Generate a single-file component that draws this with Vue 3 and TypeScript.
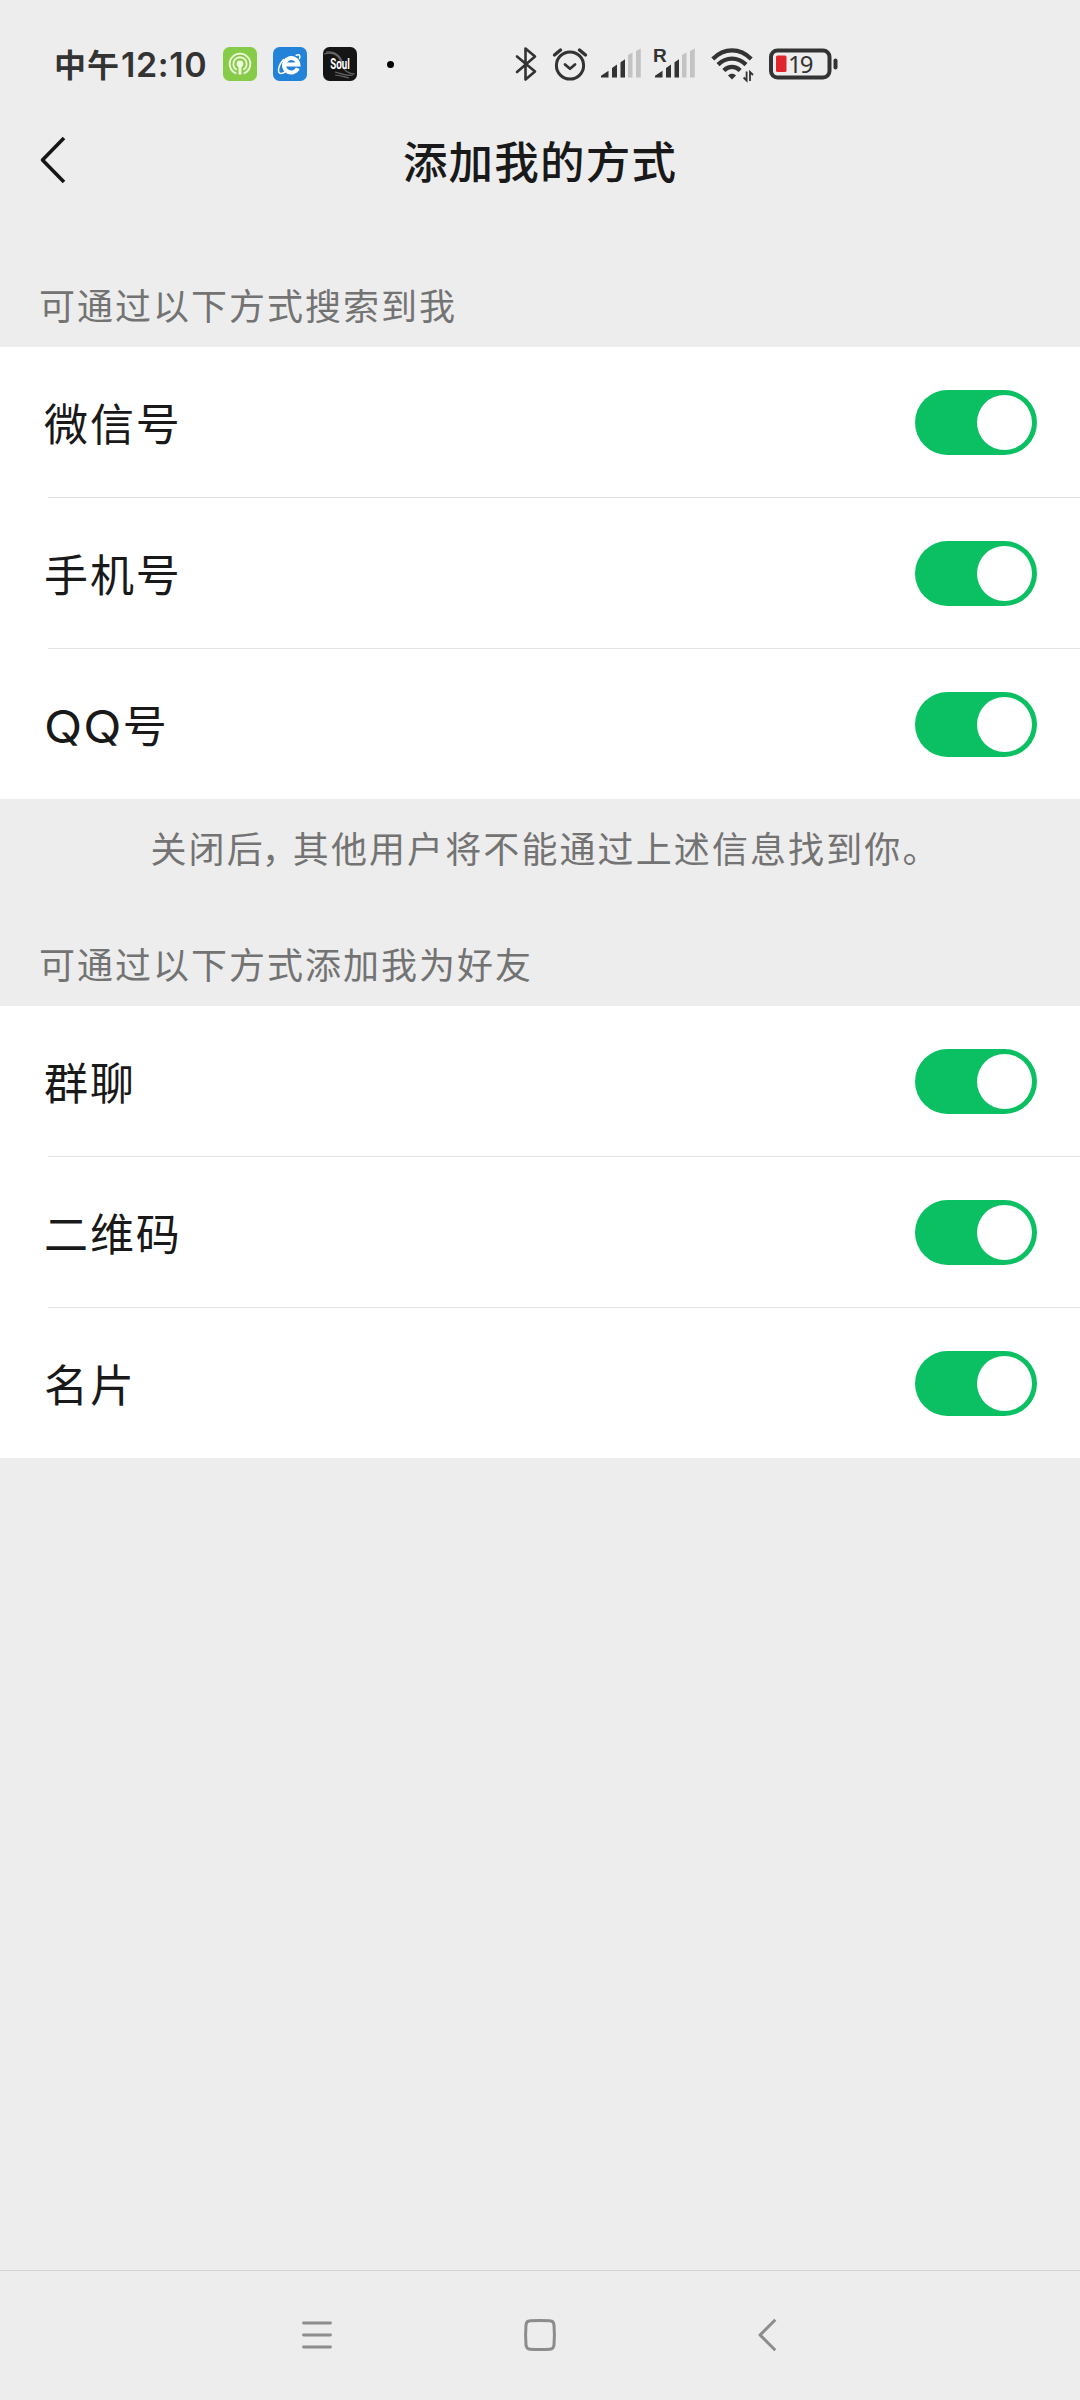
<script setup lang="ts">
import { reactive } from 'vue'

interface Item {
  latin?: string
  label: string
  on: boolean
}

const searchItems = reactive<Item[]>([
  { label: '微信号', on: true },
  { label: '手机号', on: true },
  { latin: 'QQ', label: '号', on: true },
])

const addItems = reactive<Item[]>([
  { label: '群聊', on: true },
  { label: '二维码', on: true },
  { label: '名片', on: true },
])

const groups = [
  { title: '可通过以下方式搜索到我', items: searchItems, hint: true },
  { title: '可通过以下方式添加我为好友', items: addItems, hint: false },
]
</script>

<template>
  <div class="screen">
    <div class="status">
      <div class="clock"><span class="noon">中午</span><span class="time">12:10</span></div>
      <div class="apps">
        <svg width="34" height="34" viewBox="0 0 34 34">
          <rect width="34" height="34" rx="6.5" fill="#86cc48" />
          <g fill="none" stroke="#effbdc" stroke-width="1.9" stroke-linecap="round">
            <path d="M12.6 26.2a10.3 10.3 0 1 1 8.800 0" />
            <path d="M13 22.3a6.7 6.7 0 1 1 8 0" />
          </g>
          <circle cx="17" cy="16.8" r="3.4" fill="#effbdc" />
          <path d="M17 18v9.500" stroke="#effbdc" stroke-width="3" />
        </svg>
        <svg width="34" height="34" viewBox="0 0 34 34">
          <rect width="34" height="34" rx="6.500" fill="#2383d8" />
          <path d="M24.800 21.300A7.200 7.200 0 1 1 25.400 17.600H12" fill="none" stroke="#fff" stroke-width="4" />
          <path d="M26.500 11.500c1.200-3.300-.4-4.500-3.300-3.300M10.500 12.500C6.500 17 4.600 22.500 5.900 25.300c.8 1.700 3.600 1.300 6.100-.3" fill="none" stroke="#fff" stroke-width="1.500" stroke-linecap="round" />
        </svg>
        <svg width="34" height="34" viewBox="0 0 34 34">
          <rect width="34" height="34" rx="6.500" fill="#151515" />
          <path d="M1 7c10-3 16 2 18 11 2 6 6 9 13 9M3 5c10-1 15 4 17 13M12 25c5 1 12 5 18 3M12 28c5 0 9 2 14 3" fill="none" stroke="#666" stroke-width="1.200" />
          <text x="17" y="21.500" class="soul" text-anchor="middle" textLength="19.500" lengthAdjust="spacingAndGlyphs">Soul</text>
        </svg>
        <i class="dot"></i>
      </div>
      <div class="system">
        <svg class="bt" width="22" height="36" viewBox="0 0 22 36" fill="none" stroke="#333" stroke-width="2.600" stroke-linejoin="round" stroke-linecap="round">
          <path d="M2 10.500 20 25.500 10.500 33.500V2.500l9.500 8L2 26" />
        </svg>
        <svg class="alarm" width="36" height="36" viewBox="0 0 36 36" fill="none" stroke="#333" stroke-linecap="round">
          <circle cx="18" cy="19.500" r="13.600" stroke-width="3" />
          <path d="m13 18.500 5 4.300 5-4.300" stroke-width="2.800" stroke-linejoin="round" />
          <path d="M2.500 9 8.500 4M33.500 9l-6-5" stroke-width="3.400" />
        </svg>
        <svg class="signal" width="42" height="36" viewBox="0 0 42 36">
          <path d="M1 31.500v-1.800l7.500-5v6.800zM12 31.500v-9.500l5-3.500v13zM20.500 31.500V16.200l4.500-3v18.300z" fill="#333" />
          <path d="M28 31.500V9l4.500-2.500v25zM36 31.500V5l4.800-2.500v29z" fill="#c3c3c3" />
        </svg>
        <svg class="signal second" width="42" height="36" viewBox="0 0 42 36">
          <path d="M1 31.500v-1.800l7.500-5v6.800zM12 31.500v-9.500l5-3.500v13zM20.500 31.500V16.200l4.500-3v18.300z" fill="#333" />
          <path d="M28 31.500V9l4.500-2.500v25zM36 31.500V5l4.800-2.500v29z" fill="#c3c3c3" />
          <text x="-1" y="16" class="roam">R</text>
        </svg>
        <svg class="wifi" width="43" height="36" viewBox="0 0 43 36" fill="none" stroke="#333" stroke-width="4.300">
          <path d="M1.800 13C13 1.500 29 1.500 40.200 13M7 18.600c8.300-8 19.700-8 28 0M12.800 24.500c5-4.700 11.400-4.700 16.400 0" />
          <path d="M21 33.500l-4-4c2-2.300 6-2.300 8 0z" fill="#333" stroke="none" />
          <path d="M35.600 25.500v9l-3-3M39 35v-9l3 3" stroke-width="1.800" />
        </svg>
        <svg class="battery" width="70" height="36" viewBox="0 0 70 36">
          <rect x="2" y="4.500" width="58.500" height="27" rx="6.500" fill="none" stroke="#333" stroke-width="4" />
          <rect x="7" y="9.500" width="10.500" height="16.500" rx="1.500" fill="#e0262c" />
          <text x="19" y="27" class="percent">19</text>
          <rect x="64.500" y="12.500" width="4" height="11" rx="2" fill="#333" />
        </svg>
      </div>
    </div>

    <header class="bar">
      <svg class="back" width="28" height="50" viewBox="0 0 28 50" fill="none" stroke="#161616" stroke-width="3.600" stroke-linejoin="round">
        <path d="M26 3 4.500 25 26 47" />
      </svg>
      <h1>添加我的方式</h1>
    </header>

    <section v-for="(group, i) in groups" :key="group.title" :class="['section', i ? 'later' : 'first']">
      <h2>{{ group.title }}</h2>
      <ul>
        <li v-for="item in group.items" :key="item.label">
          <span class="label"><span v-if="item.latin" class="latin">{{ item.latin }}</span>{{ item.label }}</span>
          <button type="button" role="switch" :aria-checked="item.on" :class="['switch', { on: item.on }]" @click="item.on = !item.on">
            <i></i>
          </button>
        </li>
      </ul>
      <p v-if="group.hint">关闭后<span class="comma">，</span>其他用户将不能通过上述信息找到你。</p>
    </section>

    <nav>
      <svg width="36" height="36" viewBox="0 0 36 36" stroke="#8c8c8c" stroke-width="2.800" stroke-linecap="round">
        <path d="M4.500 6h27M4.500 18h27M4.500 30h27" />
      </svg>
      <svg width="36" height="36" viewBox="0 0 36 36" fill="none" stroke="#8c8c8c" stroke-width="3">
        <path d="M8 3.800Q18 3 28 3.800Q31.700 4 32 8Q32.800 18 32 28Q31.700 32 28 32.200Q18 33 8 32.200Q4.300 32 4 28Q3.200 18 4 8Q4.300 4 8 3.800Z" />
      </svg>
      <svg width="36" height="36" viewBox="0 0 36 36" fill="none" stroke="#8c8c8c" stroke-width="3" stroke-linejoin="round">
        <path d="M30.300 2.800 15 18l15.300 15.200" />
      </svg>
    </nav>
  </div>
</template>

<style>
body {
  background: #ededed;
}
</style>

<style scoped>
.screen {
  width: 1080px;
  height: 2400px;
  background: #ededed;
  color: #191919;
  font-family: "Noto Sans CJK SC", sans-serif;
  display: flex;
  flex-direction: column;
  overflow: hidden;
}
.status {
  height: 128px;
  flex: none;
  display: flex;
  align-items: center;
  padding-left: 54px;
  box-sizing: border-box;
}
.clock {
  width: 169px;
  margin-top: -3px;
  display: flex;
  align-items: baseline;
  color: #333;
  white-space: nowrap;
}
.noon {
  width: 67px;
  font-size: 32px;
  font-weight: 700;
  letter-spacing: 1px;
}
.time {
  font-family: Inter, sans-serif;
  font-size: 34px;
  font-weight: 600;
  letter-spacing: 0.6px;
}
.apps {
  width: 292px;
  display: flex;
  align-items: center;
  gap: 16px;
}
.dot {
  width: 7px;
  height: 7px;
  margin-left: 14px;
  border-radius: 50%;
  background: #000;
}
.soul {
  font: 700 14px Roboto, sans-serif;
  fill: #fff;
}
.system {
  display: flex;
  align-items: center;
}
.system svg {
  overflow: visible;
}
.alarm {
  margin-left: 15px;
}
.signal {
  margin-left: 12px;
}
.signal.second {
  margin-left: 12px;
}
.roam {
  font: 700 19px "Liberation Sans", sans-serif;
  fill: #333;
}
.wifi {
  margin-left: 15px;
}
.battery {
  margin-left: 15px;
}
.percent {
  font: 400 24px "Noto Sans", sans-serif;
  letter-spacing: -2px;
  fill: #333;
}
.bar {
  height: 68px;
  flex: none;
  display: grid;
  grid-template-columns: 120px 1fr 120px;
  align-items: center;
}
.back {
  margin: -4px 0 0 38px;
}
h1 {
  margin: -4px 0 0;
  text-align: center;
  font-size: 44.5px;
  line-height: 68px;
  font-weight: 500;
  letter-spacing: 1.2px;
}
.section.first {
  padding-top: 70px;
}
.section.later {
  padding-top: 24px;
}
h2 {
  margin: 0;
  padding-left: 39px;
  height: 81px;
  line-height: 76px;
  font-size: 36px;
  font-weight: 400;
  letter-spacing: 2px;
  color: #737373;
}
ul {
  margin: 0;
  padding: 0;
  list-style: none;
  background: #fff;
}
li {
  height: 150px;
  padding: 0 43px 0 44px;
  display: flex;
  align-items: center;
  justify-content: space-between;
}
li + li {
  padding-top: 1px;
  background: linear-gradient(#e3e3e3, #e3e3e3) 48px 0 / 100% 1px no-repeat;
}
.label {
  font-size: 44px;
  line-height: 64px;
  letter-spacing: 1.9px;
}
.latin {
  display: inline-block;
  margin-right: 8px;
  font-family: Inter, sans-serif;
  font-size: 45px;
  font-weight: 400;
  line-height: 1;
  letter-spacing: 1px;
  transform: scaleX(1.11);
  transform-origin: left;
}
.switch {
  width: 122px;
  height: 65px;
  padding: 5px;
  border: 0;
  border-radius: 33px;
  background: #d8d8d8;
  display: flex;
}
.switch.on {
  background: #0bc062;
  justify-content: flex-end;
}
.switch i {
  width: 55px;
  height: 55px;
  border-radius: 50%;
  background: #fff;
}
p {
  margin: 0;
  padding-left: 11px;
  height: 102px;
  line-height: 97px;
  text-align: center;
  font-size: 36px;
  letter-spacing: 2.1px;
  color: #737373;
}
.comma {
  letter-spacing: -8px;
  margin-left: -3px;
  margin-right: 3px;
}
nav {
  height: 130px;
  margin-top: auto;
  padding-bottom: 2px;
  box-sizing: border-box;
  border-top: 1px solid #d2d2d2;
  display: flex;
  align-items: center;
  justify-content: center;
  gap: 187px;
}
</style>
